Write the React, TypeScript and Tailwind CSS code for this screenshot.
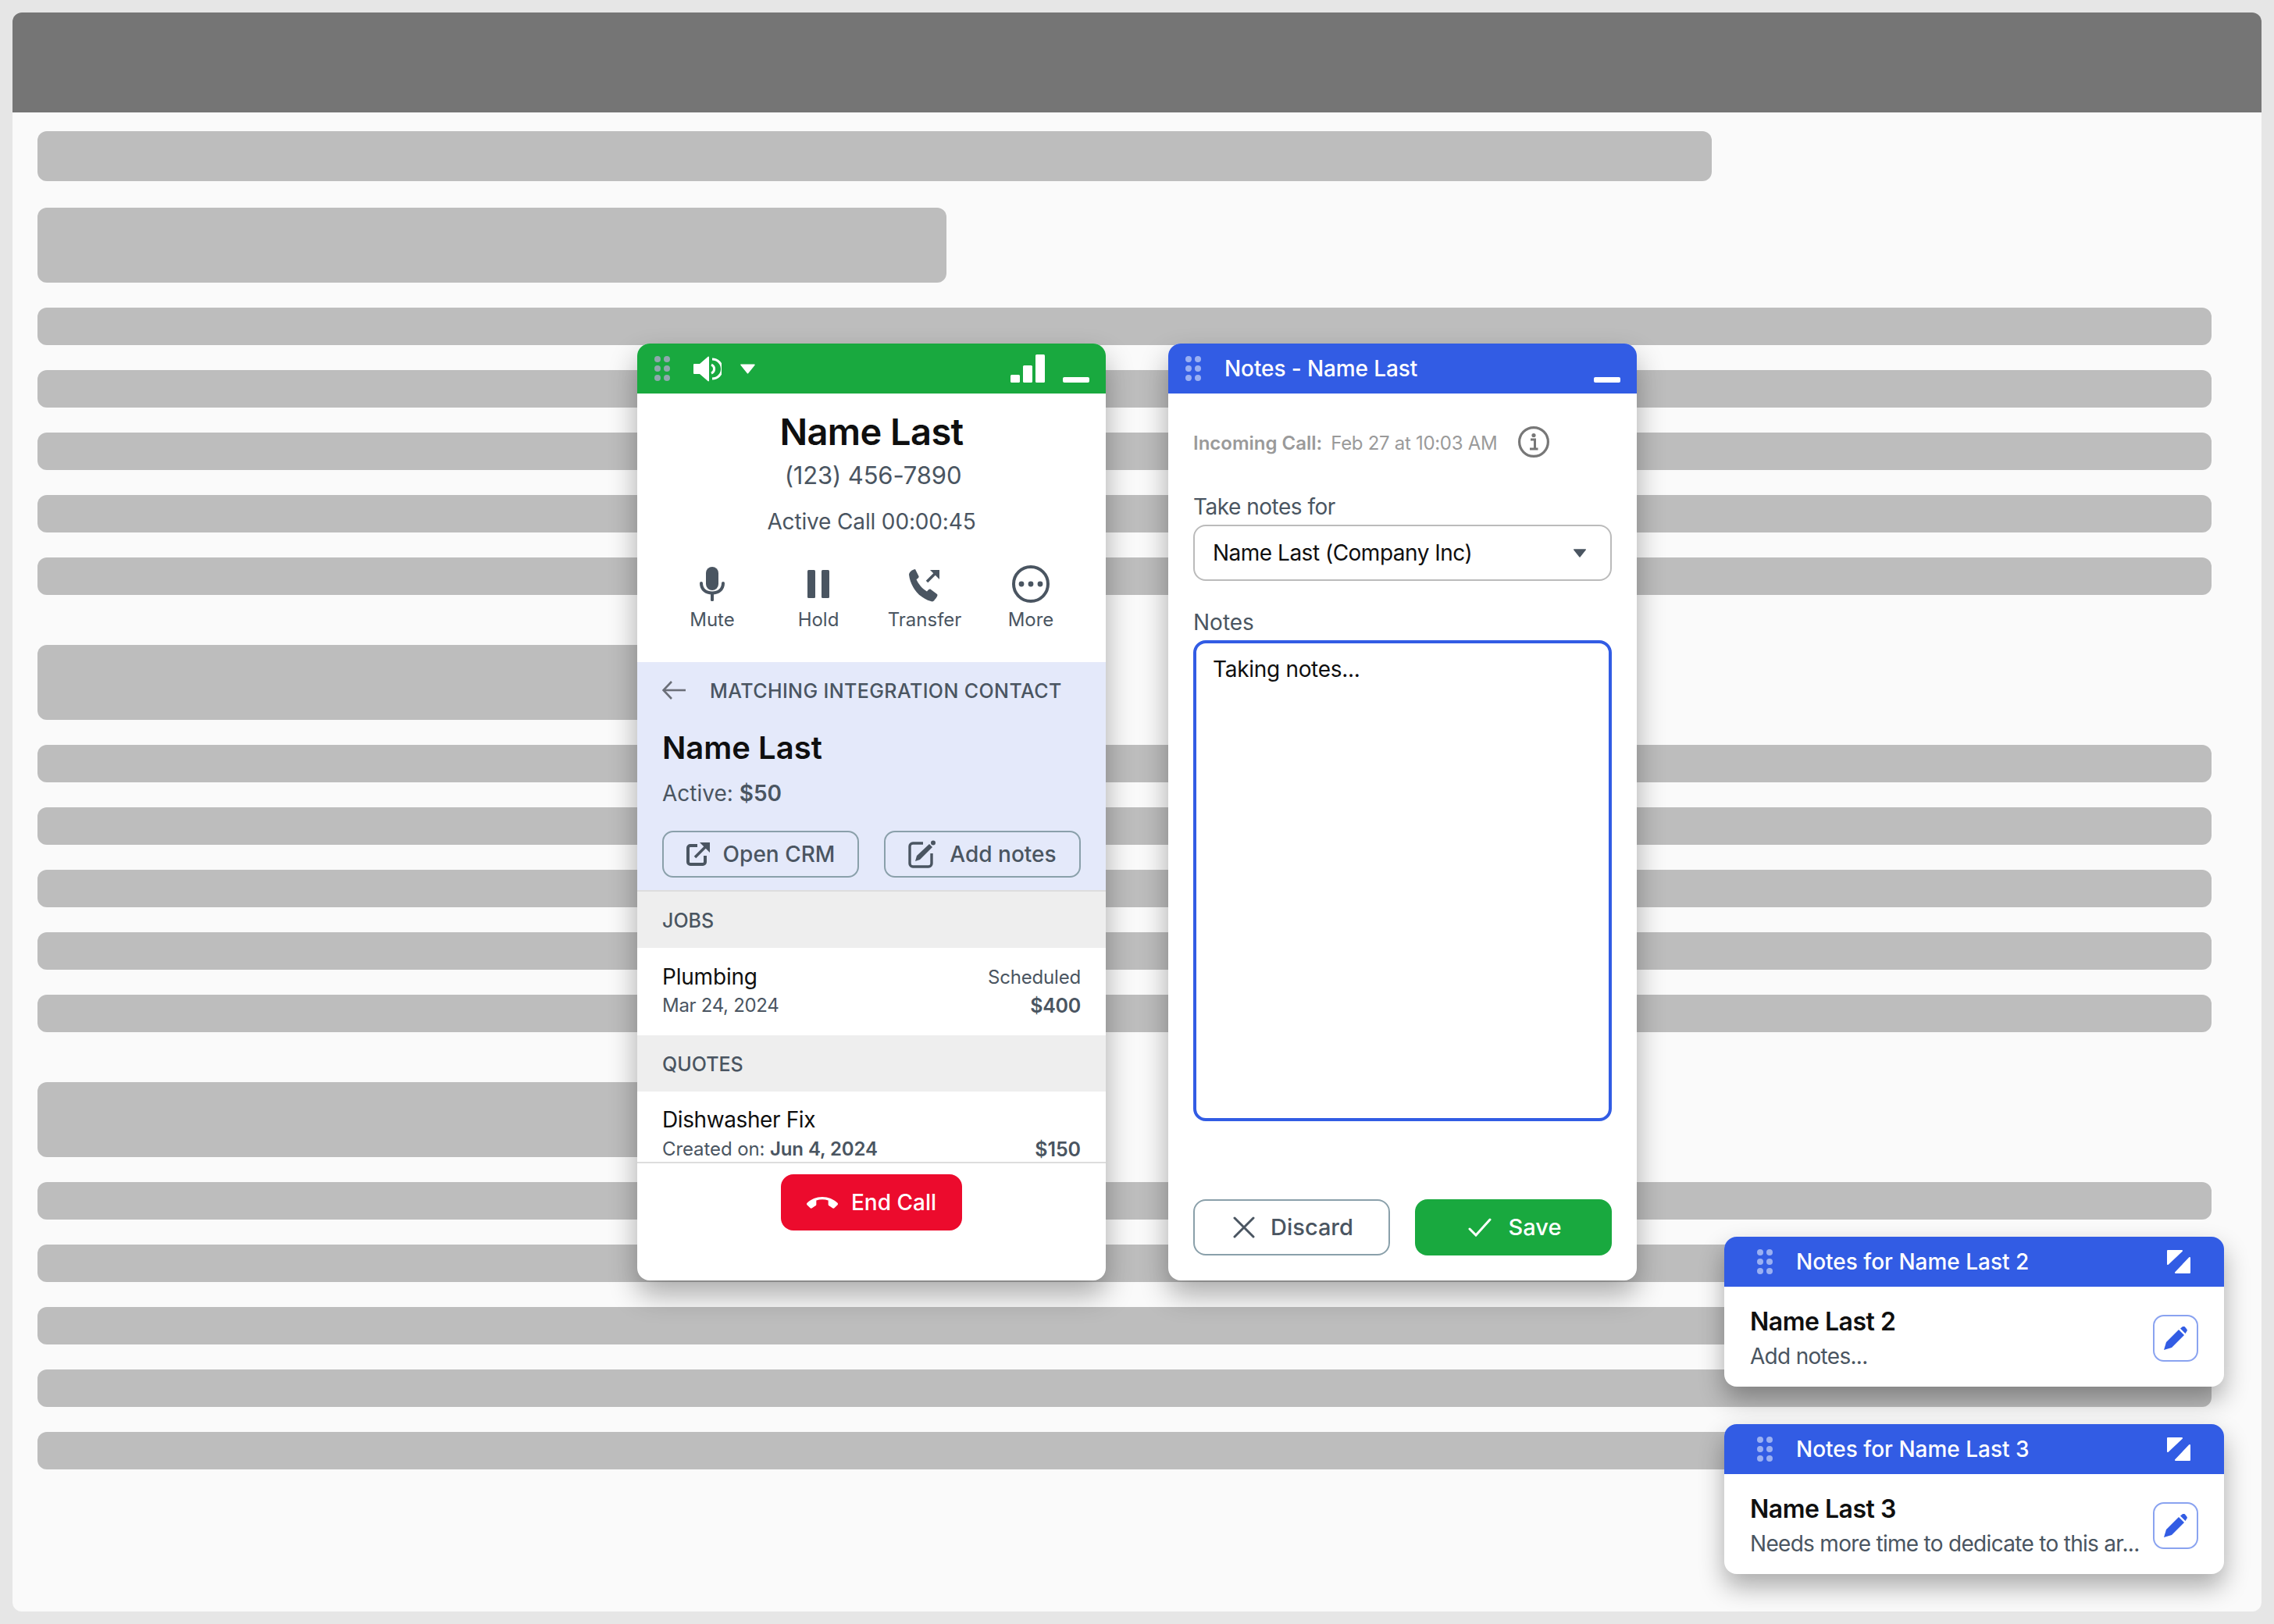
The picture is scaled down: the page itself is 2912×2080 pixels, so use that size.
const barLines = [0, 1, 2, 3, 4];

function Lines() {
  return (
    <div className="flex flex-col gap-8">
      {barLines.map((i) => (
        <div key={i} className="h-12 w-[2784px] rounded-xl bg-[#bdbdbd]" />
      ))}
    </div>
  );
}

function Grip({ color }: { color: string }) {
  return (
    <svg width="20" height="32" viewBox="0 0 20 32" className="shrink-0" fill={color}>
      <circle cx="4" cy="4" r="4" />
      <circle cx="16" cy="4" r="4" />
      <circle cx="4" cy="16" r="4" />
      <circle cx="16" cy="16" r="4" />
      <circle cx="4" cy="28" r="4" />
      <circle cx="16" cy="28" r="4" />
    </svg>
  );
}

function Minimize() {
  return <div className="mt-[28px] h-[7px] w-[34px] rounded-[2px] bg-white" />;
}

function Speaker() {
  return (
    <svg width="36" height="33" viewBox="0 0 36 33" fill="none">
      <path d="M0 11 a1 1 0 0 1 1-1 H8 L19 0.5 a1 1 0 0 1 1 1 V31.5 a1 1 0 0 1-1 1 L8 23 H1 a1 1 0 0 1-1-1 Z" fill="#fff" />
      <path d="M23 11 a6 6 0 0 1 0 11" stroke="#fff" strokeWidth="3" />
      <path d="M24 4 a12.5 12.5 0 0 1 0 25" stroke="#fff" strokeWidth="3" />
    </svg>
  );
}

function Mic() {
  return (
    <svg width="32" height="44" viewBox="0 0 32 44" fill="none">
      <rect x="8" y="0" width="16" height="30" rx="8" fill="#4a5561" />
      <path d="M2 21 C2 29 8 33.5 16 33.5 C24 33.5 30 29 30 21" stroke="#4a5561" strokeWidth="4" strokeLinecap="round" />
      <rect x="14" y="33" width="4" height="11" rx="1.5" fill="#4a5561" />
    </svg>
  );
}

function Pause() {
  return (
    <svg width="28" height="36" viewBox="0 0 28 36" fill="#4a5561">
      <rect x="0" y="0" width="10" height="36" rx="1.5" />
      <rect x="18" y="0" width="10" height="36" rx="1.5" />
    </svg>
  );
}

function Transfer() {
  return (
    <svg width="42" height="44" viewBox="0 0 42 44" fill="none" className="translate-y-[2px]">
      <path
        d="M9 1 L13.5 10 C14 11.5 13 12.5 10.5 14 C13 20 18 26 24 29.5 C26 27 27.5 26 29 27 L37 33 C38 34 37.5 36 34 40 C33 42 31 43 29 42 C14 38 3 24 1 8 C1 6 3 3 7 1.5 Z"
        fill="#4a5561"
      />
      <path d="M24 17 L36 5" stroke="#4a5561" strokeWidth="3.6" />
      <path d="M28 2 H40 V14 Z" fill="#4a5561" />
    </svg>
  );
}

function More() {
  return (
    <svg width="48" height="48" viewBox="0 0 48 48" fill="none">
      <circle cx="24" cy="24" r="22" stroke="#4a5561" strokeWidth="4" />
      <circle cx="12" cy="24" r="3.4" fill="#4a5561" />
      <circle cx="24" cy="24" r="3.4" fill="#4a5561" />
      <circle cx="36" cy="24" r="3.4" fill="#4a5561" />
    </svg>
  );
}

function ActionItem({ label, children }: { label: string; children: React.ReactNode }) {
  return (
    <div className="flex flex-col items-center">
      <div className="flex h-12 items-center justify-center">{children}</div>
      <div className="mt-[6px] text-[24px] leading-8 text-[#4a5561]">{label}</div>
    </div>
  );
}

function OpenIcon() {
  return (
    <svg width="30" height="30" viewBox="0 0 30 30" fill="none">
      <path d="M14 4 H5 a3 3 0 0 0-3 3 V25 a3 3 0 0 0 3 3 H21 a3 3 0 0 0 3-3 V17" stroke="#4a5561" strokeWidth="4" />
      <path d="M11 19 L25 5" stroke="#4a5561" strokeWidth="3.6" />
      <path d="M17 0 H30 V13 Z" fill="#4a5561" />
    </svg>
  );
}

function NoteIcon() {
  return (
    <svg width="36" height="36" viewBox="0 0 36 36" fill="none">
      <path d="M19 4 H6 a4 4 0 0 0-4 4 V30 a4 4 0 0 0 4 4 H26 a4 4 0 0 0 4-4 V17" stroke="#4a5561" strokeWidth="3.4" />
      <path d="M9 27 L11 20 L27 5 L31 9 L15 25 Z" fill="#4a5561" />
      <circle cx="32" cy="3.4" r="3" fill="#4a5561" />
    </svg>
  );
}

function Pencil() {
  return (
    <svg width="30" height="30" viewBox="0 0 30 30" fill="#325ce4">
      <path d="M0 30 L3 20 L19 4 L26 11 L10 27 Z" />
      <path d="M21 2.5 L23.5 0.5 a2.5 2.5 0 0 1 3.5 0 L29 3 a2.5 2.5 0 0 1 0 3.5 L27.5 9 Z" />
    </svg>
  );
}

function Expand() {
  return (
    <svg width="30" height="30" viewBox="0 0 30 30" fill="#fff" stroke="#fff" strokeWidth="2" strokeLinejoin="round">
      <path d="M1 1 H19 L1 18 Z" />
      <path d="M29 10 V29 H11 Z" />
    </svg>
  );
}

function Caret({ w, h, color }: { w: number; h: number; color: string }) {
  return (
    <svg width={w} height={h} viewBox="0 0 18 12" fill={color} stroke={color} strokeWidth="1.5" strokeLinejoin="round">
      <path d="M1 1 H17 L9 11 Z" />
    </svg>
  );
}

function SectionHead({ label }: { label: string }) {
  return (
    <div className="flex h-[72px] items-center bg-[#eeeeee] px-8 pt-[4px] text-[25px] font-medium text-[#4a5561]">
      {label}
    </div>
  );
}

function PhoneWindow() {
  return (
    <div className="absolute left-[816px] top-[440px] h-[1200px] w-[600px] overflow-hidden rounded-2xl bg-white shadow-[0_18px_36px_rgba(0,0,0,0.32)]">
      <div className="flex h-16 items-center bg-[#19a93f] pl-[22px] pr-[21px]">
        <Grip color="#8fa8ad" />
        <div className="ml-[30px]">
          <Speaker />
        </div>
        <div className="ml-6">
          <Caret w={19} h={13} color="#fff" />
        </div>
        <svg width="44" height="36" viewBox="0 0 44 36" fill="#fff" className="ml-auto">
          <rect x="0" y="26" width="12" height="10" rx="1.5" />
          <rect x="16" y="14" width="12" height="22" rx="1.5" />
          <rect x="32" y="0" width="12" height="36" rx="1.5" />
        </svg>
        <div className="ml-[23px]">
          <Minimize />
        </div>
      </div>

      <div className="h-[344px] pt-[21px] text-center">
        <div className="text-[47px] font-semibold leading-[56px] tracking-[-0.6px] text-[#0f0f0f]">Name Last</div>
        <div className="mt-2 pl-1 text-[31px] leading-10 tracking-[-0.15px] text-[#4a5561]">(123) 456-7890</div>
        <div className="mt-[21px] text-[28px] leading-9 tracking-[-0.15px] text-[#4a5561]">Active Call 00:00:45</div>
        <div className="mt-[38px] grid grid-cols-4 px-7">
          <ActionItem label="Mute">
            <Mic />
          </ActionItem>
          <ActionItem label="Hold">
            <Pause />
          </ActionItem>
          <ActionItem label="Transfer">
            <Transfer />
          </ActionItem>
          <ActionItem label="More">
            <More />
          </ActionItem>
        </div>
      </div>

      <div className="box-border h-[642px] overflow-hidden border-b-2 border-[#dddddd]">
        <div className="h-[292px] bg-[#e4e9fa] px-8 pt-5">
          <div className="flex h-8 items-center">
            <svg width="30" height="24" viewBox="0 0 30 24" fill="none" stroke="#6b6f78" strokeWidth="2.6">
              <path d="M30 12 H2" />
              <path d="M12 1 L1.5 12 L12 23" />
            </svg>
            <span className="ml-[31px] translate-y-[2px] text-[25px] font-medium tracking-[0.4px] text-[#4a5561]">
              MATCHING INTEGRATION CONTACT
            </span>
          </div>
          <div className="mt-[34px] text-[40px] font-semibold leading-[48px] text-[#0f0f0f]">Name Last</div>
          <div className="mt-4 text-[28px] leading-9 text-[#4a5561]">
            Active: <span className="font-semibold">$50</span>
          </div>
          <div className="mt-[30px] grid grid-cols-2 gap-8">
            <div className="flex h-[60px] items-center justify-center gap-[17px] rounded-[14px] border-2 border-[#8aa0aa] text-[28px] font-medium text-[#4a5561]">
              <OpenIcon />
              Open CRM
            </div>
            <div className="flex h-[60px] items-center justify-center gap-[17px] rounded-[14px] border-2 border-[#8aa0aa] text-[28px] font-medium text-[#4a5561]">
              <NoteIcon />
              Add notes
            </div>
          </div>
        </div>

        <div className="border-t-2 border-[#dddddd]">
          <SectionHead label="JOBS" />
        </div>
        <div className="h-[112px] px-8 pt-[19px]">
          <div className="flex items-center justify-between">
            <span className="text-[28px] leading-9 tracking-[-0.2px] text-[#0f0f0f]">Plumbing</span>
            <span className="translate-y-[1px] text-[24px] leading-9 tracking-[-0.2px] text-[#4a5561]">Scheduled</span>
          </div>
          <div className="mt-[3px] flex items-center justify-between text-[24px] leading-8 tracking-[-0.3px] text-[#4a5561]">
            <span>Mar 24, 2024</span>
            <span className="text-[25px] font-semibold">$400</span>
          </div>
        </div>
        <SectionHead label="QUOTES" />
        <div className="px-8 pt-[18px]">
          <div className="text-[28px] leading-9 tracking-[-0.4px] text-[#0f0f0f]">Dishwasher Fix</div>
          <div className="mt-1 flex items-center justify-between text-[24px] leading-8 tracking-[-0.1px] text-[#4a5561]">
            <span>
              Created on: <span className="font-semibold">Jun 4, 2024</span>
            </span>
            <span className="text-[25px] font-semibold">$150</span>
          </div>
        </div>
      </div>

      <div className="flex justify-center pt-[14px]">
        <div className="flex h-[72px] w-[232px] items-center justify-center gap-[17px] rounded-2xl bg-[#ec0b2d] text-[28px] font-medium text-white">
          <svg width="40" height="15" viewBox="0 7 24 9" fill="#fff">
            <path d="M12 9c-1.6 0-3.15.25-4.6.72v3.1c0 .39-.23.74-.56.9-.98.49-1.87 1.12-2.66 1.85-.18.18-.43.28-.7.28-.28 0-.53-.11-.71-.29L.29 13.08c-.18-.17-.29-.42-.29-.7 0-.28.11-.53.29-.71C3.34 8.78 7.46 7 12 7s8.66 1.78 11.71 4.67c.18.18.29.43.29.71 0 .28-.11.53-.29.71l-2.48 2.48c-.18.18-.43.29-.71.29-.27 0-.52-.11-.7-.28-.79-.74-1.69-1.36-2.67-1.85-.33-.16-.56-.5-.56-.9v-3.1C15.15 9.25 13.6 9 12 9z" />
          </svg>
          End Call
        </div>
      </div>
    </div>
  );
}

function NotesWindow() {
  return (
    <div className="absolute left-[1496px] top-[440px] h-[1200px] w-[600px] overflow-hidden rounded-2xl bg-white shadow-[0_18px_36px_rgba(0,0,0,0.32)]">
      <div className="flex h-16 items-center bg-[#325ce4] pl-[22px] pr-[21px]">
        <Grip color="#9ab0f2" />
        <span className="ml-[30px] text-[28px] font-medium tracking-[-0.1px] text-white">Notes - Name Last</span>
        <div className="ml-auto">
          <Minimize />
        </div>
      </div>
      <div className="px-8">
        <div className="mt-[42px] flex h-10 items-center text-[24px] text-[#9a9a9a]">
          <span className="translate-y-[2px] font-semibold">Incoming Call:</span>
          <span className="ml-[11px] translate-y-[2px] tracking-[-0.3px]">Feb 27 at 10:03 AM</span>
          <svg width="40" height="40" viewBox="0 0 40 40" fill="none" className="ml-[27px]">
            <circle cx="20" cy="20" r="18.4" stroke="#777" strokeWidth="3.2" />
            <circle cx="20" cy="11.5" r="2.6" fill="#777" />
            <path d="M16 17 H21.5 V28 M15 29 H25.5" stroke="#777" strokeWidth="3" />
          </svg>
        </div>
        <div className="mt-[45px] text-[28px] leading-9 tracking-[-0.5px] text-[#4a5561]">Take notes for</div>
        <div className="mt-[5px] flex h-[72px] items-center justify-between rounded-2xl border-2 border-[#bbbbbb] pl-[23px] pr-[30px] text-[28px] tracking-[-0.5px] text-[#0f0f0f]">
          Name Last (Company Inc)
          <Caret w={18} h={11} color="#4a5561" />
        </div>
        <div className="mt-[35px] text-[28px] leading-9 text-[#4a5561]">Notes</div>
        <div className="mt-[5px] h-[616px] rounded-2xl border-4 border-[#325ce4] pl-[21px] pt-[15px] text-[28px] leading-9 tracking-[-0.3px] text-[#0f0f0f]">
          Taking notes...
        </div>
        <div className="mt-[100px] grid grid-cols-2 gap-8">
          <div className="flex h-[72px] items-center justify-center gap-[20px] rounded-2xl border-2 border-[#8aa0aa] pl-[4px] text-[29px] font-medium text-[#4a5561]">
            <svg width="28" height="28" viewBox="0 0 28 28" stroke="#4a5561" strokeWidth="3" strokeLinecap="round">
              <path d="M2 2 L26 26 M26 2 L2 26" />
            </svg>
            Discard
          </div>
          <div className="flex h-[72px] items-center justify-center gap-[22px] rounded-2xl bg-[#19a93f] pl-[3px] text-[29px] font-medium text-white">
            <svg width="30" height="24" viewBox="0 0 30 24" fill="none" stroke="#fff" strokeWidth="3" strokeLinecap="round">
              <path d="M2 14 L10 22 L28 2" />
            </svg>
            Save
          </div>
        </div>
      </div>
    </div>
  );
}

function MiniNote({ top, title, name, note }: { top: string; title: string; name: string; note: string }) {
  return (
    <div className={`absolute left-[2208px] ${top} h-[192px] w-[640px] overflow-hidden rounded-2xl bg-white shadow-[0_16px_32px_rgba(0,0,0,0.32)]`}>
      <div className="flex h-16 items-center bg-[#325ce4] pl-[42px] pr-[43px]">
        <Grip color="#9ab0f2" />
        <span className="ml-[30px] text-[28px] font-medium text-white">{title}</span>
        <div className="ml-auto">
          <Expand />
        </div>
      </div>
      <div className="flex items-center pl-[33px] pr-[33px] pt-[24px]">
        <div className="min-w-0 flex-1">
          <div className="text-[32px] font-semibold leading-[42px] tracking-[-0.5px] text-[#0f0f0f]">{name}</div>
          <div className="mt-[5px] whitespace-nowrap text-[28px] leading-9 tracking-[-0.7px] text-[#4a5561]">{note}</div>
        </div>
        <div className="ml-2 flex h-[60px] w-[58px] shrink-0 items-center justify-center rounded-[14px] border-2 border-[#8aa3f0]">
          <Pencil />
        </div>
      </div>
    </div>
  );
}

export default function App() {
  return (
    <div className="relative h-[2080px] w-[2912px] overflow-hidden bg-[#e6e6e6] p-4 font-['Inter',sans-serif]">
      <div className="h-[2048px] w-[2880px] overflow-hidden rounded-xl bg-[#fafafa]">
        <div className="h-32 bg-[#757575]" />
        <div className="pl-8 pt-6">
          <div className="h-16 w-[2144px] rounded-xl bg-[#bdbdbd]" />
          <div className="mt-[34px] h-24 w-[1164px] rounded-xl bg-[#bdbdbd]" />
          <div className="mt-8">
            <Lines />
          </div>
          <div className="mt-16 h-24 w-[1164px] rounded-xl bg-[#bdbdbd]" />
          <div className="mt-8">
            <Lines />
          </div>
          <div className="mt-16 h-24 w-[1164px] rounded-xl bg-[#bdbdbd]" />
          <div className="mt-8">
            <Lines />
          </div>
        </div>
      </div>

      <PhoneWindow />
      <NotesWindow />
      <MiniNote top="top-[1584px]" title="Notes for Name Last 2" name="Name Last 2" note="Add notes..." />
      <MiniNote top="top-[1824px]" title="Notes for Name Last 3" name="Name Last 3" note="Needs more time to dedicate to this ar..." />
    </div>
  );
}
